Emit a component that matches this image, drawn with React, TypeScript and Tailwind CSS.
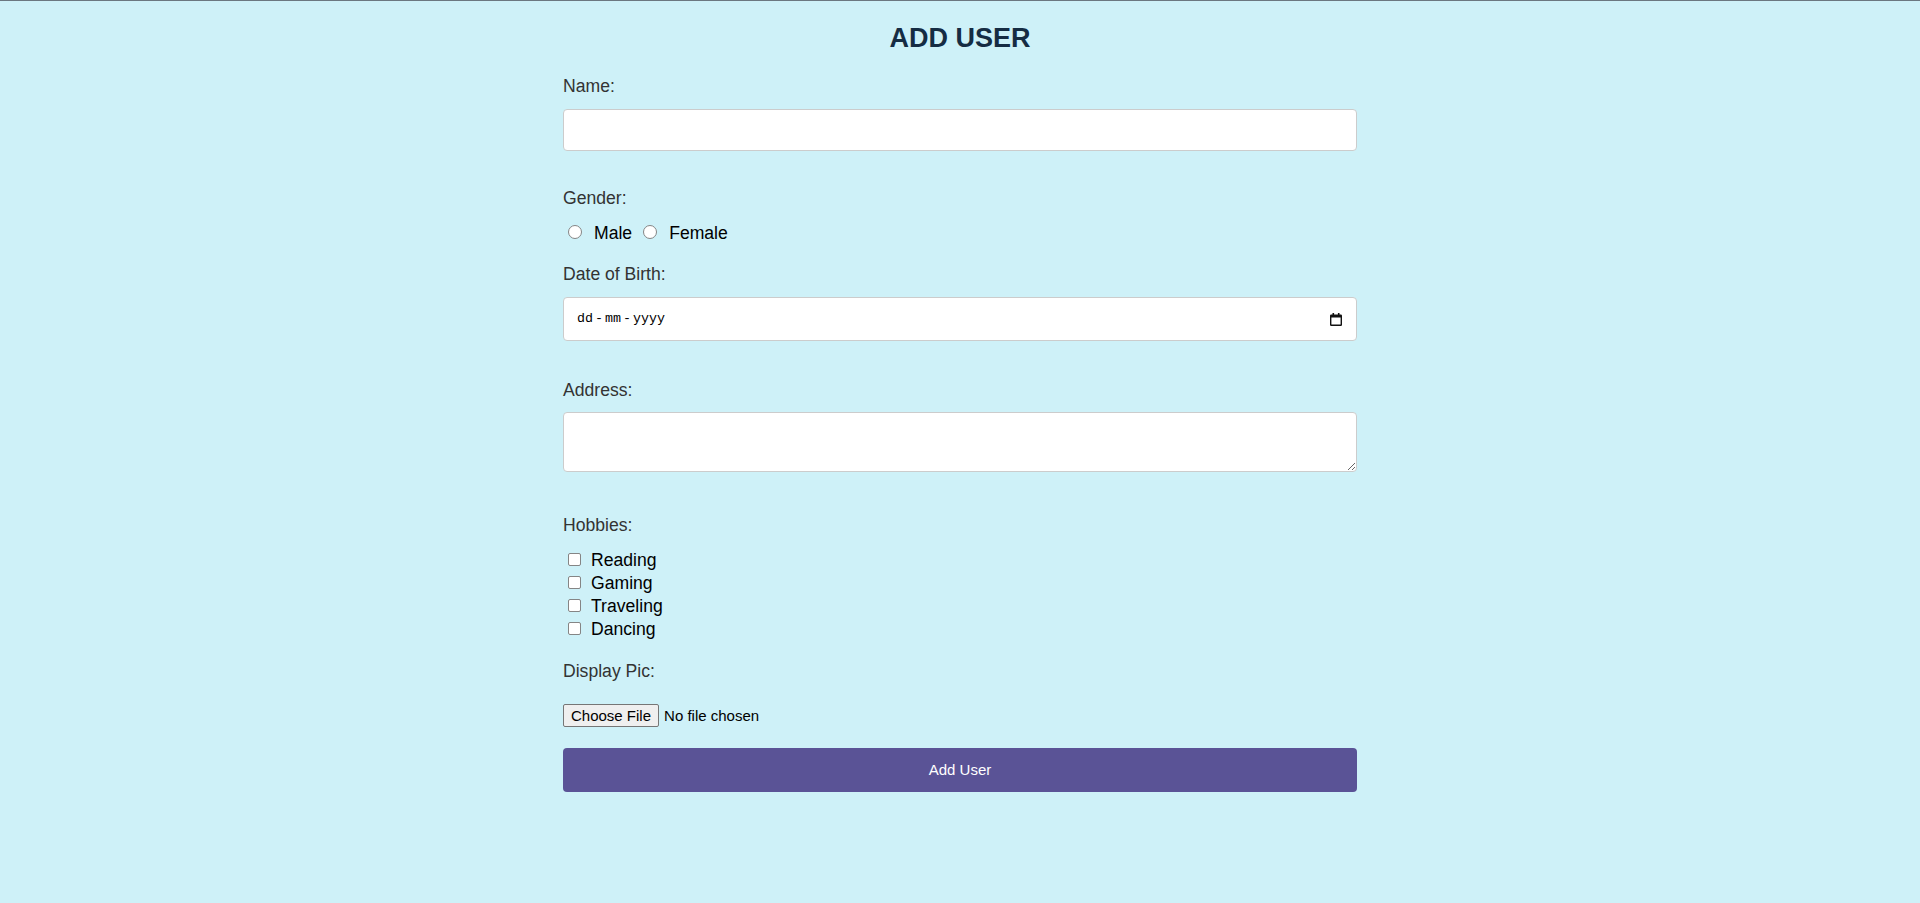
export default function App() {
  const hobbies = ["Reading", "Gaming", "Traveling", "Dancing"];
  return (
    <div className="min-h-[903px] w-full bg-[#cef1f8] border-t border-[#6b7780] font-['Liberation_Sans',Arial,sans-serif]">
      <form className="mx-auto w-[794px] flex flex-col" onSubmit={(e) => e.preventDefault()}>
        <h2 className="mt-[22px] text-center text-[27px] leading-[31px] font-bold text-[#152c43]">ADD USER</h2>

        <label className="mt-[22px] text-[17.6px] leading-[20px] text-[#333]">Name:</label>
        <input type="text" className="mt-[13px] h-[42px] rounded-[4px] border border-[#ccc] bg-white px-3 text-[15px] outline-none" />

        <label className="mt-[37px] text-[17.6px] leading-[20px] text-[#333]">Gender:</label>
        <div className="mt-[15px] flex h-[20px] items-start text-[17.6px] leading-[20px] text-black">
          <input
            type="radio"
            name="gender"
            className="ml-[5px] mt-[2px] h-[14px] w-[14px] shrink-0 appearance-none rounded-full border border-[#858585] bg-white"
          />
          <span className="ml-[12px]">Male</span>
          <input
            type="radio"
            name="gender"
            className="ml-[11px] mt-[2px] h-[14px] w-[14px] shrink-0 appearance-none rounded-full border border-[#858585] bg-white"
          />
          <span className="ml-[12px]">Female</span>
        </div>

        <label className="mt-[21px] text-[17.6px] leading-[20px] text-[#333]">Date of Birth:</label>
        <div className="mt-[13px] flex h-[44px] items-center rounded-[4px] border border-[#ccc] bg-white pl-[12px] pr-[14px]">
          <div className="flex font-['Liberation_Mono',monospace] text-[13.33px] leading-[16px] text-black">
            <span className="px-px">dd</span>
            <span className="px-px">-</span>
            <span className="px-px">mm</span>
            <span className="px-px">-</span>
            <span className="px-px">yyyy</span>
          </div>
          <svg className="ml-auto" width="12" height="13" viewBox="0 0 12 13">
            <rect x="2.5" y="0" width="1.6" height="2.5" fill="#111" />
            <rect x="7.9" y="0" width="1.6" height="2.5" fill="#111" />
            <path
              fillRule="evenodd"
              fill="#111"
              d="M1.2 1.5h9.6a1.2 1.2 0 0 1 1.2 1.2v9.1a1.2 1.2 0 0 1-1.2 1.2H1.2A1.2 1.2 0 0 1 0 11.8V2.7a1.2 1.2 0 0 1 1.2-1.2zM1.4 4.5v7.1h9.2V4.5z"
            />
          </svg>
        </div>

        <label className="mt-[39px] text-[17.6px] leading-[20px] text-[#333]">Address:</label>
        <textarea className="mt-[12px] h-[60px] rounded-[4px] border border-[#ccc] bg-white px-3 py-2 text-[15px] outline-none" />

        <label className="mt-[43px] text-[17.6px] leading-[20px] text-[#333]">Hobbies:</label>
        <div className="mt-[14px] flex flex-col text-[17.6px] text-black">
          {hobbies.map((h) => (
            <div key={h} className="flex h-[23px] items-start leading-[23px]">
              <input
                type="checkbox"
                className="ml-[5px] mt-[4px] h-[13px] w-[13px] shrink-0 appearance-none rounded-[2px] border border-[#858585] bg-white"
              />
              <span className="ml-[10px]">{h}</span>
            </div>
          ))}
        </div>

        <label className="mt-[20px] text-[17.6px] leading-[20px] text-[#333]">Display Pic:</label>
        <input
          type="file"
          className="mt-[23px] self-start text-[15px] leading-[17px] text-black file:mr-[5px] file:rounded-[2px] file:border file:border-solid file:border-[#767676] file:bg-[#efefef] file:px-[7px] file:py-[2px] file:text-black"
        />

        <button type="submit" className="mt-[21px] h-[44px] rounded-[4px] bg-[#5a5396] text-[15px] text-white">
          Add User
        </button>
      </form>
    </div>
  );
}
